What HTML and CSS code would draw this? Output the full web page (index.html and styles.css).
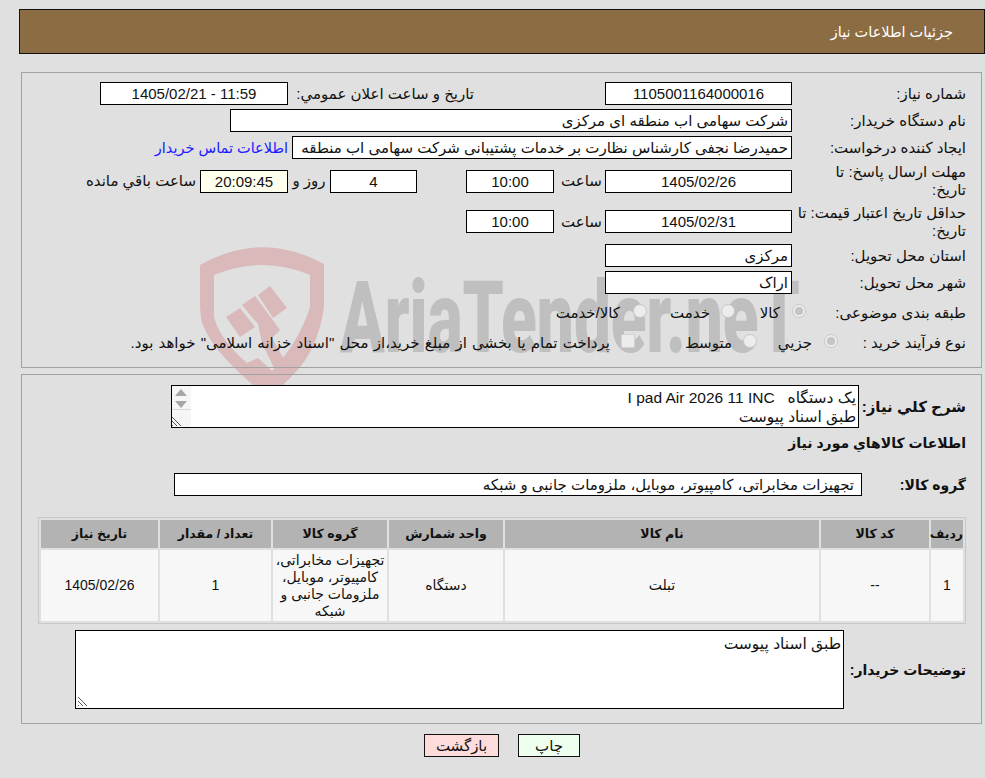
FILE: index.html
```html
<!DOCTYPE html>
<html lang="fa" dir="rtl">
<head>
<meta charset="utf-8">
<title>جزئیات اطلاعات نیاز</title>
<link rel="stylesheet" href="styles.css">
</head>
<body>
<svg class="watermark" width="985" height="420" viewBox="0 0 985 420" aria-hidden="true">
  <path class="wm-red" fill-rule="evenodd" d="M200 25 Q262 -10 324 24 L324 67 Q318 110 293 135 L270 158 L253 145 Q212 110 202 83 Q200 75 200 60 Z M214 35 L214 77 Q220 100 247 123 L258 118 L272 131 Q300 100 310 67 L310 35 Q262 15 214 35 Z"/>
  <path class="wm-red" d="M226 77 L240 68 L255 87 L240 97 Z M242 65 L255 56 L280 90 L272 98 L290 130 L276 132 L262 103 L258 84 Z M258 55 L270 46 L287 68 L273 78 Z"/>
  <text class="wm-text" x="340" y="112" textLength="460" lengthAdjust="spacingAndGlyphs" direction="ltr" unicode-bidi="bidi-override">AriaTender.neT</text>
</svg>

<header class="page-title">جزئیات اطلاعات نیاز</header>

<section class="panel panel-main">
  <div class="row">
    <div class="label">شماره نیاز:</div>
    <div class="field w-187 center">1105001164000016</div>
    <div class="label-inline announce">تاریخ و ساعت اعلان عمومي:</div>
    <div class="field w-188 center ltr">1405/02/21 - 11:59</div>
  </div>
  <div class="row">
    <div class="label">نام دستگاه خریدار:</div>
    <div class="field w-562">شرکت سهامی اب منطقه ای مرکزی</div>
  </div>
  <div class="row">
    <div class="label">ایجاد کننده درخواست:</div>
    <div class="field w-500">حمیدرضا نجفی کارشناس نظارت بر خدمات پشتیبانی شرکت سهامی اب منطقه</div>
    <a class="contact" href="#">اطلاعات تماس خریدار</a>
  </div>
  <div class="row row-tall">
    <div class="label">مهلت ارسال پاسخ: تا<br>تاریخ:</div>
    <div class="field w-187 center">1405/02/26</div>
    <div class="unit">ساعت</div>
    <div class="field w-88 center">10:00</div>
    <div class="spacer-49"></div>
    <div class="field w-87 center">4</div>
    <div class="unit-days">روز و</div>
    <div class="field w-88 center timer">20:09:45</div>
    <div class="unit-left">ساعت باقي مانده</div>
  </div>
  <div class="row row-tall-b">
    <div class="label">حداقل تاریخ اعتبار قیمت: تا<br>تاریخ:</div>
    <div class="field w-187 center">1405/02/31</div>
    <div class="unit">ساعت</div>
    <div class="field w-88 center">10:00</div>
  </div>
  <div class="row">
    <div class="label">استان محل تحویل:</div>
    <div class="field w-187">مرکزی</div>
  </div>
  <div class="row">
    <div class="label">شهر محل تحویل:</div>
    <div class="field w-187">اراک</div>
  </div>
  <div class="row row-choice">
    <div class="label-choice l-160">طبقه بندی موضوعی:</div>
    <div class="choice c-kala"><span class="radio checked"></span><span class="choice-text">کالا</span></div>
    <div class="choice c-khedmat"><span class="radio"></span><span class="choice-text">خدمت</span></div>
    <div class="choice c-both"><span class="radio"></span><span class="choice-text">کالا/خدمت</span></div>
  </div>
  <div class="row row-choice">
    <div class="label-choice l-128">نوع فرآیند خرید :</div>
    <div class="choice c-jozi"><span class="radio checked"></span><span class="choice-text">جزيي</span></div>
    <div class="choice c-mid"><span class="radio"></span><span class="choice-text">متوسط</span></div>
    <span class="checkbox"></span>
    <div class="pay-note choice-text">پرداخت تمام یا بخشی از مبلغ خرید،از محل "اسناد خزانه اسلامی" خواهد بود.</div>
  </div>
</section>

<section class="panel panel-items">
  <div class="row-desc">
    <div class="label-bold label-lg w-107">شرح کلي نياز:</div>
    <div class="textbox desc">
      <div>یک دستگاه &nbsp; I pad Air 2026 11 INC</div>
      <div>طبق اسناد پیوست</div>
      <div class="scroller">
        <svg width="20" height="41" viewBox="0 0 20 41" aria-hidden="true">
          <path class="sb-arrow" d="M4 10 L10 3 L16 10 Z M4 15 L16 15 L10 22 Z"/>
          <path class="sb-line" d="M0 23.5 H20"/>
          <path class="grip" d="M1 31 L10 40 M1 35 L6 40 M1 39 L2 40"/>
        </svg>
      </div>
    </div>
  </div>
  <h2 class="section-head">اطلاعات کالاهاي مورد نياز</h2>
  <div class="row-group">
    <div class="label-bold w-104">گروه کالا:</div>
    <div class="field w-688 group-value">تجهیزات مخابراتی، کامپیوتر، موبایل، ملزومات جانبی و شبکه</div>
  </div>
  <table class="items">
    <colgroup>
      <col class="col-row"><col class="col-code"><col class="col-name"><col class="col-unit"><col class="col-group"><col class="col-qty"><col class="col-date">
    </colgroup>
    <thead>
      <tr><th>ردیف</th><th>کد کالا</th><th>نام کالا</th><th>واحد شمارش</th><th>گروه کالا</th><th>تعداد / مقدار</th><th>تاریخ نیاز</th></tr>
    </thead>
    <tbody>
      <tr><td>1</td><td>--</td><td>تبلت</td><td>دستگاه</td><td>تجهیزات مخابراتی، کامپیوتر، موبایل، ملزومات جانبی و شبکه</td><td>1</td><td>1405/02/26</td></tr>
    </tbody>
  </table>
  <div class="row-notes">
    <div class="label-bold w-122">توضیحات خریدار:</div>
    <div class="textbox notes">
      طبق اسناد پیوست
      <svg class="notes-grip" width="12" height="12" viewBox="0 0 12 12" aria-hidden="true"><path class="grip" d="M1 2 L10 11 M1 6 L6 11 M1 10 L2 11"/></svg>
    </div>
  </div>
</section>

<div class="actions">
  <button class="btn btn-print" type="button">چاپ</button>
  <button class="btn btn-back" type="button">بازگشت</button>
</div>
</body>
</html>
```
FILE: styles.css
```css
* { box-sizing: border-box; }
html, body { margin: 0; padding: 0; }
body {
  position: relative;
  width: 985px;
  height: 778px;
  overflow: hidden;
  background: #e0e0e0;
  color: #111;
  font-family: "Liberation Sans", "DejaVu Sans", sans-serif;
  font-size: 15px;
  line-height: 18px;
}
.watermark { position: absolute; left: 0; top: 240px; z-index: 0; }
.wm-red { fill: #d9b9ba; }
.wm-text { fill: #bfbfbf; font-family: "Roboto", sans-serif; font-weight: 900; font-size: 100px; }

.page-title {
  position: relative;
  margin: 9px 0 0 0;
  width: 966px;
  height: 45px;
  padding: 0 31px;
  background: #8c6c42;
  border: 1px solid #111;
  color: #fff;
  font-size: 14.5px;
  line-height: 44px;
}
.panel {
  position: relative;
  margin-right: 3px;
  width: 961px;
  border: 1px solid #a2a2a2;
  padding-right: 15px;
}
.panel-main { margin-top: 18px; height: 296px; padding-top: 9px; }
.panel-items { margin-top: 6px; height: 350px; padding-top: 10px; }

.row { display: flex; align-items: center; min-height: 23px; margin-bottom: 4px; }
.row-tall { height: 36px; }
.row-tall-b { height: 37px; }
.row-choice { height: 26px; }
.label { width: 174px; flex: none; padding-left: 4px; }
.label-choice { flex: none; padding-top: 3px; white-space: nowrap; }
.l-160 { width: 160px; }
.l-128 { width: 128px; }
.field {
  flex: none;
  height: 23px;
  border: 1px solid #000;
  background: #fff;
  padding: 0 3px;
  line-height: 21px;
  white-space: nowrap;
  overflow: hidden;
}
.center { text-align: center; }
.ltr { direction: ltr; }
.w-187 { width: 187px; }
.w-188 { width: 188px; }
.w-562 { width: 562px; }
.w-500 { width: 500px; }
.w-88 { width: 88px; }
.w-87 { width: 87px; }
.w-688 { width: 688px; }
.timer { background: #ffffee; }
.announce { width: 317px; padding-right: 131px; flex: none; white-space: nowrap; }
.contact { color: #1a1aff; text-decoration: none; margin-right: 4px; white-space: nowrap; font-size: 14.5px; }
.unit { width: 51px; flex: none; text-align: center; padding-left: 4px; }
.spacer-49 { width: 49px; flex: none; }
.unit-days { width: 42px; flex: none; text-align: center; }
.unit-left { margin-right: 4px; white-space: nowrap; }

.choice { display: flex; align-items: center; flex: none; white-space: nowrap; }
.choice-text { padding-top: 3px; }
.c-kala { width: 71px; }
.c-khedmat { width: 88px; }
.c-both { width: 120px; }
.c-jozi { width: 81px; }
.c-mid { width: 122px; }
.c-kala .radio { margin-left: 12px; }
.c-khedmat .radio { margin-left: 11px; }
.c-both .radio { margin-left: 13px; }
.c-jozi .radio { margin-left: 12px; }
.c-mid .radio { margin-left: 11px; }
.radio {
  width: 14px;
  height: 14px;
  flex: none;
  border-radius: 50%;
  border: 1px solid #c9c9c9;
  background: #ececec;
  display: inline-block;
  position: relative;
}
.radio.checked::after {
  content: "";
  position: absolute;
  left: 2px;
  top: 2px;
  width: 8px;
  height: 8px;
  border-radius: 50%;
  background: #c4c4c4;
}
.checkbox {
  flex: none;
  width: 14px;
  height: 14px;
  border: 1px solid #d4d4d4;
  border-radius: 2px;
  background: #ececec;
  margin-left: 11px;
}
.pay-note { white-space: nowrap; word-spacing: 1px; }

.label-bold { flex: none; font-weight: 700; font-size: 14px; }
.label-lg { font-size: 15px; }
.w-107 { width: 107px; }
.w-104 { width: 104px; }
.w-122 { width: 122px; }
.row-desc, .row-group, .row-notes { display: flex; align-items: center; }
.textbox {
  position: relative;
  flex: none;
  background: #fff;
  border: 1px solid #000;
  padding: 0 2px;
  overflow: hidden;
  font-size: 15.5px;
}
.desc { width: 688px; height: 43px; line-height: 19px; padding-top: 2px; }
.scroller { position: absolute; left: 0; top: 0; width: 19px; height: 41px; background: #f6f6f6; }
.scroller svg { display: block; }
.sb-arrow { fill: #a6a6a6; }
.sb-line { stroke: #d8d8d8; stroke-width: 1; fill: none; }
.grip { stroke: #555; stroke-width: 1; fill: none; }
.section-head { margin: 4px 0 0; height: 22px; font-size: 14px; line-height: 22px; font-weight: 700; }
.row-group { margin-top: 19px; }
.group-value { padding-right: 7px; }
.items {
  margin: 21px 0 0 0;
  width: 928px;
  table-layout: fixed;
  border-collapse: separate;
  border-spacing: 2px;
  border: 1px solid #c8c8c8;
}
.col-row { width: 32px; }
.col-code { width: 108px; }
.col-name { width: 314px; }
.col-unit { width: 114px; }
.col-group { width: 114px; }
.col-qty { width: 111px; }
.col-date { width: 117px; }
.items th {
  height: 28px;
  padding: 0;
  background: #b3b3b3;
  font-size: 12.5px;
  font-weight: 700;
}
.items td {
  height: 71px;
  padding: 0 2px;
  background: #f7f7f7;
  text-align: center;
  font-size: 14px;
  line-height: 17px;
}
.row-notes { margin-top: 6px; }
.notes { width: 769px; height: 79px; padding-top: 4px; }
.notes-grip { position: absolute; left: 1px; bottom: 1px; }

.actions {
  position: relative;
  display: flex;
  justify-content: center;
  gap: 19px;
  margin: 10px 0 0 0;
  width: 966px;
}
.btn {
  height: 23px;
  border: 1px solid #111;
  padding: 0;
  font-family: inherit;
  font-size: 15px;
  color: #111;
}
.btn-back { width: 75px; background: #ffdcdc; }
.btn-print { width: 62px; background: #efffef; }
```
